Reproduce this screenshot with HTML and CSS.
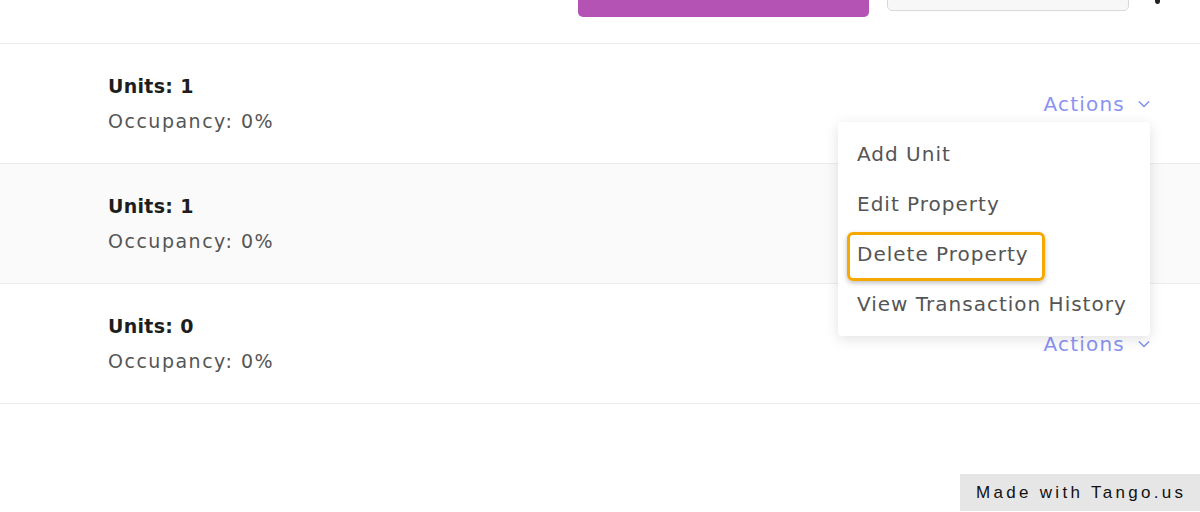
FILE: index.html
```html
<!DOCTYPE html>
<html lang="en">
<head>
    <meta charset="UTF-8">
    <meta name="viewport" content="width=device-width, initial-scale=1.0">
    <title>Properties</title>
    <link rel="stylesheet" href="styles.css">
</head>
<body>
    <div class="topbar">
        <button class="add-button"></button>
        <div class="search"></div>
        <div class="more-icon"></div>
    </div>
    <div class="list">
        <div class="row">
            <div class="info">
                <div class="units">Units: 1</div>
                <div class="occupancy">Occupancy: 0%</div>
            </div>
            <div class="actions">Actions
                <svg width="12" height="8" viewBox="0 0 12 8"><path d="M1 1.5 L6 6.5 L11 1.5" fill="none" stroke="#7f8cf2" stroke-width="1.4"/></svg>
            </div>
            <ul class="menu">
                <li>Add Unit</li>
                <li>Edit Property</li>
                <li class="highlighted">Delete Property<span class="focus-ring"></span></li>
                <li>View Transaction History</li>
            </ul>
        </div>
        <div class="row alt">
            <div class="info">
                <div class="units">Units: 1</div>
                <div class="occupancy">Occupancy: 0%</div>
            </div>
        </div>
        <div class="row">
            <div class="info">
                <div class="units">Units: 0</div>
                <div class="occupancy">Occupancy: 0%</div>
            </div>
            <div class="actions">Actions
                <svg width="12" height="8" viewBox="0 0 12 8"><path d="M1 1.5 L6 6.5 L11 1.5" fill="none" stroke="#7f8cf2" stroke-width="1.4"/></svg>
            </div>
        </div>
    </div>
    <div class="tango">Made with Tango.us</div>
</body>
</html>
```

FILE: styles.css
```css
body{
    margin: 0;
    font-family: "DejaVu Sans", "Open Sans", sans-serif;
    background-color: #fff;
    color: #222;
}
.topbar{
    height: 43px;
    display: flex;
    align-items: flex-start;
    border-bottom: 1px solid #ececec;
}
.add-button{
    margin: -20px 0 0 578px;
    width: 291px;
    height: 37px;
    border: none;
    border-radius: 5px;
    background-color: #b553b5;
}
.search{
    margin: -20px 0 0 18px;
    width: 240px;
    height: 29px;
    background-color: #f7f7f7;
    border: 1px solid #d9d9d9;
    border-radius: 5px;
}
.more-icon{
    margin: -2px 0 0 26px;
    width: 5px;
    height: 6px;
    border-radius: 50%;
    background-color: #222;
}
.row{
    position: relative;
    height: 119px;
    display: flex;
    align-items: center;
    justify-content: space-between;
    border-bottom: 1px solid #ececec;
}
.row.alt{
    background-color: #fafafa;
}
.info{
    padding-left: 108px;
}
.units{
    font-size: 19px;
    font-weight: 700;
    letter-spacing: 0.3px;
    color: #1e1e1e;
    line-height: 35px;
}
.occupancy{
    font-size: 19px;
    letter-spacing: 1.5px;
    color: #555;
    line-height: 35px;
}
.actions{
    margin-right: 50px;
    font-size: 20px;
    letter-spacing: 1.2px;
    color: #8a93f3;
    display: flex;
    align-items: center;
    gap: 13px;
}
.menu{
    position: absolute;
    top: 78px;
    right: 50px;
    width: 312px;
    margin: 0;
    padding: 7px 0;
    list-style: none;
    background-color: #fff;
    border-radius: 4px;
    box-shadow: 0 3px 14px rgba(0,0,0,0.12);
    z-index: 2;
}
.menu li{
    position: relative;
    height: 50px;
    line-height: 50px;
    padding-left: 19px;
    font-size: 20px;
    letter-spacing: 1px;
    color: #555;
}
.focus-ring{
    position: absolute;
    left: 9px;
    top: 3px;
    width: 192px;
    height: 43px;
    border: 3px solid #f5a800;
    border-radius: 6px;
    box-shadow: 0 2px 5px rgba(0,0,0,0.25);
}
.tango{
    position: fixed;
    right: 0;
    bottom: 1px;
    width: 240px;
    height: 37px;
    line-height: 37px;
    box-sizing: border-box;
    padding-left: 16px;
    background-color: #e6e6e6;
    font-family: "Liberation Sans", sans-serif;
    font-size: 17px;
    letter-spacing: 3.3px;
    color: #111;
}
```
